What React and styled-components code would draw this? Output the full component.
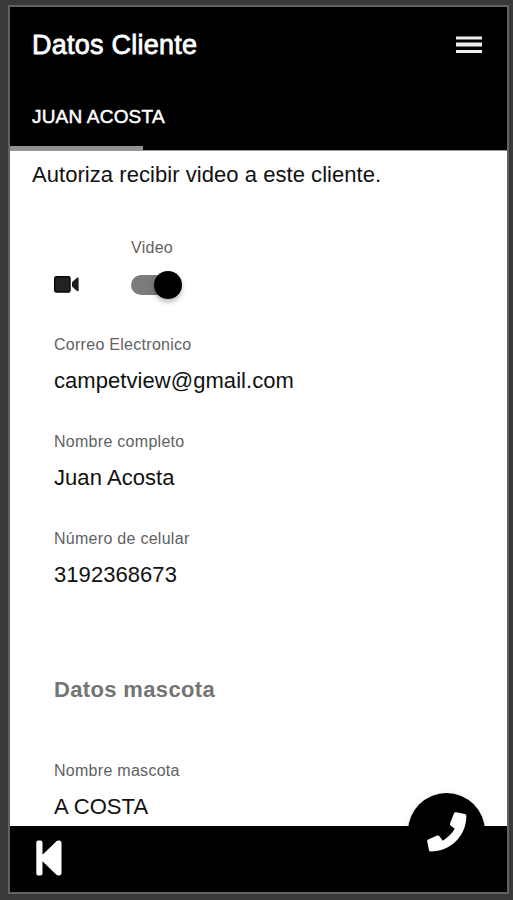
import React from 'react'
import styled, { createGlobalStyle } from 'styled-components'

const GlobalStyle = createGlobalStyle`
  * {
    box-sizing: border-box;
  }

  body {
    margin: 0;
    background: #373737;
    font-family: "Liberation Sans", Arial, sans-serif;
  }
`

const Screen = styled.div`
  width: 513px;
  height: 900px;
  padding: 5px 4px 6px 8px;
  background: #393939;
`

const Phone = styled.div`
  display: flex;
  flex-direction: column;
  height: 100%;
  border: 2px solid #626262;
  background: #fff;
  overflow: hidden;
`

const Header = styled.header`
  flex: none;
  display: flex;
  flex-direction: column;
  height: 143px;
  background: #000;
  color: #fff;
`

const TitleBar = styled.div`
  display: flex;
  align-items: center;
  justify-content: space-between;
  height: 76px;
  padding: 0 25px 0 22px;
`

const Title = styled.h1`
  margin: 0;
  font-size: 27px;
  font-weight: 400;
  line-height: 32px;
  letter-spacing: 0.25px;
  -webkit-text-stroke: 0.8px #fff;
`

const MenuButton = styled.button`
  display: flex;
  padding: 0;
  border: 0;
  background: none;
`

const Tab = styled.div`
  display: flex;
  flex: 1;
  align-items: center;
  padding: 5px 0 0 22px;
  font-size: 19px;
  line-height: 22px;
  letter-spacing: 0.2px;
  -webkit-text-stroke: 0.5px #fff;
`

const TabIndicator = styled.div`
  width: 133px;
  height: 4px;
  background: #929292;
`

const Content = styled.main`
  flex: 1;
  min-height: 0;
  padding-top: 11px;
  border-top: 1px solid #999;
  color: #111;
  overflow: hidden;
`

const Notice = styled.p`
  margin: 0 0 50px 22px;
  font-size: 22px;
  line-height: 26px;
  letter-spacing: 0.05px;
`

const Form = styled.div`
  padding-left: 44px;
`

const VideoRow = styled.div`
  display: flex;
  align-items: flex-end;
  height: 73px;
  margin-bottom: 24px;
`

const CameraIcon = styled.svg`
  display: block;
  margin: 0 52px 18px 0;
`

const SwitchField = styled.div`
  display: flex;
  flex-direction: column;
  justify-content: space-between;
  height: 100%;
`

const Label = styled.label`
  display: block;
  font-size: 16px;
  line-height: 20px;
  letter-spacing: 0.28px;
  color: #616161;
`

const Switch = styled.div`
  display: flex;
  align-items: center;
  justify-content: flex-end;
  width: 51px;
  height: 20px;
  margin-bottom: 16px;
  border-radius: 10px;
  background: linear-gradient(#7b7b7b, #7b7b7b) no-repeat 0 0 / 40px 20px;
`

const Knob = styled.div`
  flex: none;
  width: 28px;
  height: 28px;
  border-radius: 50%;
  background: #000;
  box-shadow: 0 3px 5px rgba(0, 0, 0, 0.28);
`

const Field = styled.div`
  display: flex;
  flex-direction: column;
  gap: 13px;
  height: 97px;
`

const Value = styled.div`
  font-size: 22px;
  line-height: 26px;
  letter-spacing: 0.06px;
  color: #111;
`

const SectionTitle = styled.h2`
  margin: 51px 0 58px;
  font-size: 22px;
  line-height: 26px;
  letter-spacing: 0.35px;
  color: #747474;
`

const Footer = styled.footer`
  position: relative;
  flex: none;
  display: flex;
  align-items: center;
  height: 66px;
  padding: 0 0 2px 26px;
  background: #000;
`

const CallButton = styled.button`
  position: absolute;
  top: -33px;
  right: 22px;
  display: flex;
  align-items: center;
  justify-content: center;
  width: 77px;
  height: 77px;
  padding: 0;
  border: 0;
  border-radius: 50%;
  background: #000;
  box-shadow: 0 3px 10px rgba(0, 0, 0, 0.12);
`

const fields = [
  { label: 'Correo Electronico', value: 'campetview@gmail.com' },
  { label: 'Nombre completo', value: 'Juan Acosta' },
  { label: 'Número de celular', value: '3192368673' }
]

const App = () => {
  return (
    <>
      <GlobalStyle />
      <Screen>
        <Phone>
          <Header>
            <TitleBar>
              <Title>Datos Cliente</Title>
              <MenuButton aria-label="Menu">
                <svg width="26" height="18" viewBox="0 0 26 18" fill="#eee">
                  <path d="M0 .5h26v3H0zM0 6.5h26v4H0zM0 14h26v3H0z" />
                </svg>
              </MenuButton>
            </TitleBar>
            <Tab>JUAN ACOSTA</Tab>
            <TabIndicator />
          </Header>

          <Content>
            <Notice>Autoriza recibir video a este cliente.</Notice>
            <Form>
              <VideoRow>
                <CameraIcon width="25" height="17" viewBox="0 0 25 17">
                  <rect x="0.7" y="0.7" width="15.3" height="15.3" rx="1.5" fill="#222" stroke="#080808" strokeWidth="1.4" />
                  <path d="M18 6.2l5-4.4q1.6-.8 1.6.8v11.6q0 1.6-1.6.8l-5-4.4z" fill="#1b1b1b" />
                </CameraIcon>
                <SwitchField>
                  <Label>Video</Label>
                  <Switch role="switch" aria-checked="true">
                    <Knob />
                  </Switch>
                </SwitchField>
              </VideoRow>

              {fields.map(({ label, value }) => (
                <Field key={label}>
                  <Label>{label}</Label>
                  <Value>{value}</Value>
                </Field>
              ))}

              <SectionTitle>Datos mascota</SectionTitle>

              <Field>
                <Label>Nombre mascota</Label>
                <Value>A COSTA</Value>
              </Field>
            </Form>
          </Content>

          <Footer>
            <svg width="26" height="36" viewBox="0 0 26 36" fill="#fff">
              <path d="M2 .5h2.5q2 0 2 2v12.3L20.4 1.2Q22 0 23.8.6 25.5 1.2 25.5 3v30q0 1.8-1.7 2.4-1.8.6-3.4-.6L6.5 21.2v12.3q0 2-2 2H2q-1.7 0-1.7-2v-31q0-2 1.7-2z" />
            </svg>
            <CallButton aria-label="Llamar">
              <svg width="40" height="40" viewBox="0 0 40 40" fill="#fff">
                <path d="M29.2.3l8.8 1.8q1.4.4 1.4 2C39.2 24.2 23.6 39.6 3.6 39.6q-1.3 0-1.6-1.4L.2 29.6q-.3-1.5 1.1-2.1l8.8-3.9q1.3-.5 2.2.5l3.5 4.6C20.6 25.9 24.8 22 27.7 16.8l-4.1-3.4q-1-.9-.5-2.1L27 1.3q.8-1.4 2.2-1z" />
              </svg>
            </CallButton>
          </Footer>
        </Phone>
      </Screen>
    </>
  )
}

export default App
